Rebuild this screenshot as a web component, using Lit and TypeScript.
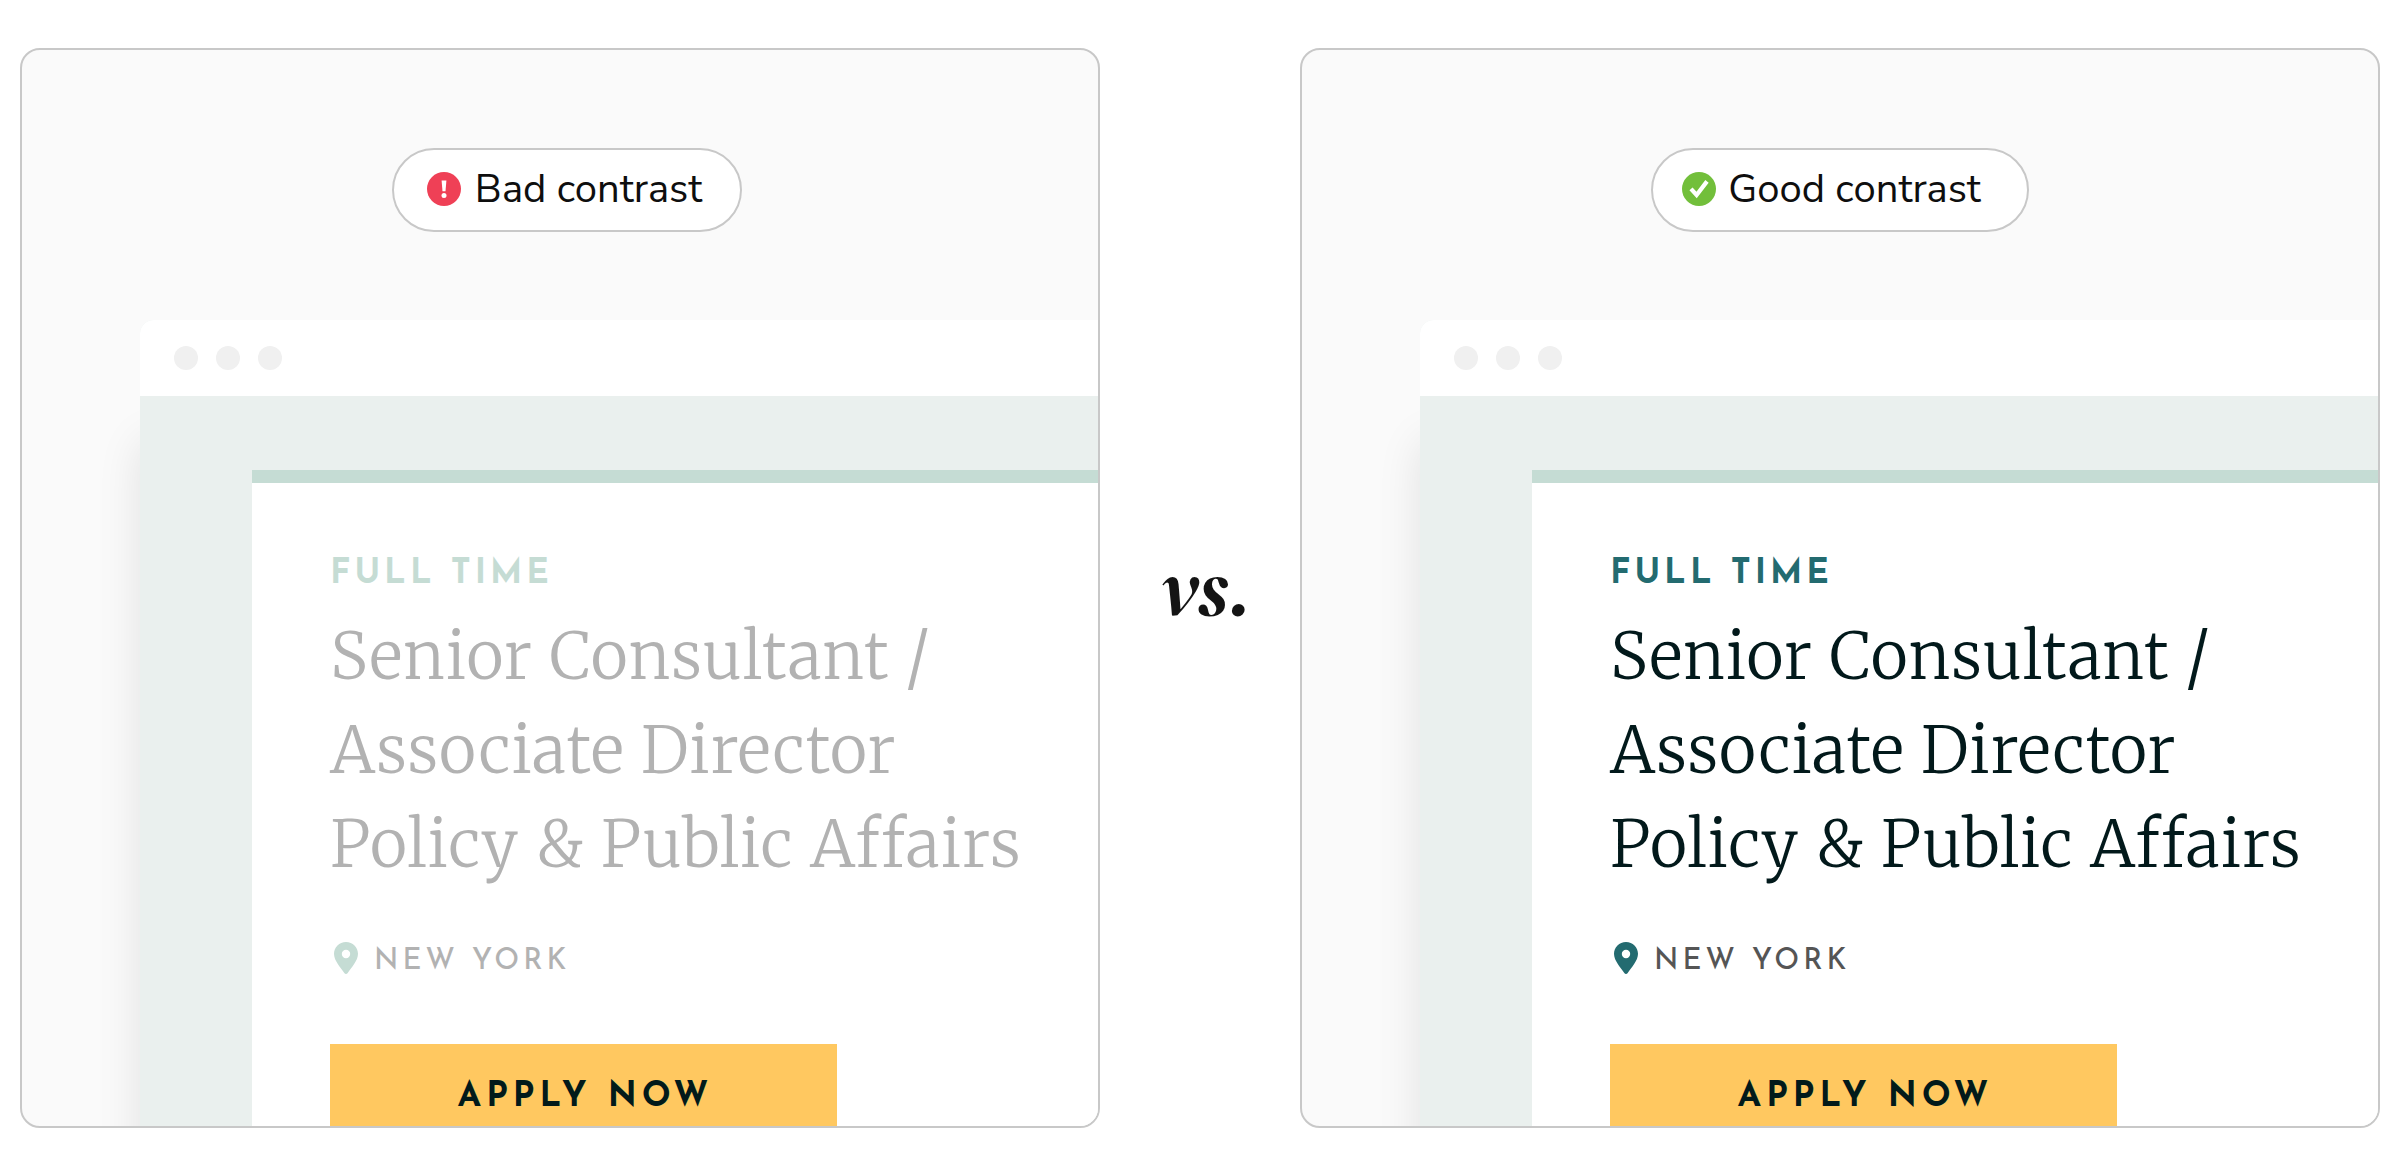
import { LitElement, html, css, svg } from "lit";
import { customElement, property } from "lit/decorators.js";

type Tone = "bad" | "good";

const alertIcon = svg`
  <circle cx="17" cy="17" r="17" fill="#ef4056"></circle>
  <path d="M14.600 8.600h4.800l-.9 10.600h-3z" fill="#fff"></path>
  <circle cx="17" cy="23.400" r="2.500" fill="#fff"></circle>`;

const checkIcon = svg`
  <circle cx="17" cy="17" r="17" fill="#72bf3b"></circle>
  <path d="M9 16.800l5.600 6.200L25 9.400" fill="none" stroke="#fff" stroke-width="4.200"></path>`;

@customElement("contrast-panel")
export class ContrastPanel extends LitElement {
  @property({ reflect: true }) tone: Tone = "bad";
  @property() label = "";

  static styles = css`
    :host {
      --accent: #c5dcd4;
      --title: #b2b2b2;
      --place: #b2b2b2;
      display: block;
      box-sizing: border-box;
      flex: 1 1 0;
      min-width: 0;
      aspect-ratio: 1;
      overflow: hidden;
      border: 2px solid #c8c8c8;
      border-radius: 20px;
      background: #fafafa;
      font-family: "Josefin Sans", Lato, "Liberation Sans", sans-serif;
    }
    :host([tone="good"]) {
      --accent: #236b70;
      --title: #02191b;
      --place: #555555;
    }
    .top {
      display: flex;
      justify-content: center;
      padding: 98px 0 88px;
    }
    :host([tone="bad"]) .top {
      padding-left: 14px;
    }
    .pill {
      display: flex;
      align-items: center;
      box-sizing: border-box;
      gap: 14px;
      height: 84px;
      padding: 0 38px 2px 33px;
      border: 2px solid #c8c8c8;
      border-radius: 42px;
      background: #fff;
      color: #0e0e0e;
      font-family: "Nunito Sans", Lato, "Liberation Sans", sans-serif;
      font-size: 40px;
      line-height: 48px;
      white-space: nowrap;
    }
    :host([tone="good"]) .pill {
      gap: 12px;
      padding: 0 46px 2px 29px;
    }
    .badge {
      flex: none;
      width: 34px;
      height: 34px;
    }
    .window {
      margin-left: 118px;
      border-top-left-radius: 14px;
      background: #eaf0ee;
      box-shadow: 0 120px 44px rgba(0, 0, 0, 0.1);
    }
    .bar {
      display: flex;
      align-items: center;
      gap: 18px;
      height: 76px;
      padding-left: 34px;
      border-top-left-radius: 14px;
      background: #fff;
    }
    .dot {
      width: 24px;
      height: 24px;
      border-radius: 50%;
      background: #f0f0f0;
    }
    .body {
      padding: 74px 0 0 112px;
    }
    .card {
      padding: 72px 0 80px 78px;
      border-top: 13px solid #c5dcd4;
      background: #fff;
    }
    .kind {
      margin: 0;
      color: var(--accent);
      font-size: 34px;
      font-weight: 700;
      line-height: 40px;
      letter-spacing: 4px;
    }
    .title {
      margin: 14px 0 51px;
      color: var(--title);
      font-family: Merriweather, "Liberation Serif", serif;
      font-size: 64px;
      font-weight: 300;
      line-height: 94px;
      letter-spacing: 1px;
      white-space: nowrap;
    }
    .place {
      display: flex;
      align-items: center;
      gap: 16px;
      margin: 0 0 70px;
      padding-left: 4px;
      color: var(--place);
      font-size: 29px;
      font-weight: 500;
      line-height: 24px;
      letter-spacing: 4px;
    }
    .city {
      padding-top: 8px;
    }
    .pin {
      flex: none;
      width: 24px;
      height: 32px;
      fill: var(--accent);
    }
    .apply {
      display: block;
      width: 66%;
      height: 98px;
      padding: 10px 0 0 4px;
      border: 0;
      background: #ffc860;
      color: #021a1a;
      font-family: inherit;
      font-size: 34px;
      font-weight: 700;
      line-height: 40px;
      letter-spacing: 5px;
      cursor: pointer;
    }
  `;

  render() {
    return html`
      <div class="top">
        <div class="pill">
          <svg class="badge" viewBox="0 0 34 34" aria-hidden="true">
            ${this.tone === "bad" ? alertIcon : checkIcon}
          </svg>
          <span>${this.label}</span>
        </div>
      </div>
      <div class="window">
        <div class="bar">
          <span class="dot"></span><span class="dot"></span><span class="dot"></span>
        </div>
        <div class="body">
          <article class="card">
            <p class="kind">FULL TIME</p>
            <h2 class="title">Senior Consultant /<br />Associate Director<br />Policy &amp; Public Affairs</h2>
            <p class="place">
              <svg class="pin" viewBox="0 0 24 32" aria-hidden="true">
                <path
                  fill-rule="evenodd"
                  d="M12 0C5.200 0 0 5.200 0 11.800c0 7 6.400 13.400 10.300 19.200.8 1.300 2.600 1.300 3.400 0C17.600 25.200 24 18.800 24 11.800 24 5.200 18.800 0 12 0zm0 7.800a4.200 4.200 0 1 1 0 8.400 4.200 4.200 0 0 1 0-8.400z"
                ></path>
              </svg>
              <span class="city">NEW YORK</span>
            </p>
            <button class="apply" type="button">APPLY NOW</button>
          </article>
        </div>
      </div>
    `;
  }
}

@customElement("app-root")
export class AppRoot extends LitElement {
  static styles = css`
    :host {
      display: block;
      background: #fff;
    }
    .compare {
      display: flex;
      align-items: center;
      padding: 48px 20px;
    }
    .versus {
      box-sizing: border-box;
      flex: 0 0 200px;
      margin: 0;
      padding-left: 10px;
      color: #141414;
      font-family: "DM Serif Display", "Liberation Serif", serif;
      font-size: 76px;
      font-style: italic;
      line-height: 96px;
      text-align: center;
    }
  `;

  render() {
    return html`
      <main class="compare">
        <contrast-panel tone="bad" label="Bad contrast"></contrast-panel>
        <p class="versus">vs.</p>
        <contrast-panel tone="good" label="Good contrast"></contrast-panel>
      </main>
    `;
  }
}
